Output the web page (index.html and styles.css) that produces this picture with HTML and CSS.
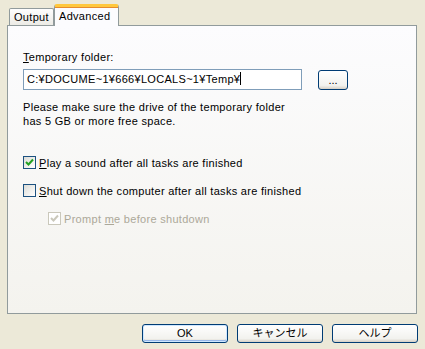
FILE: index.html
```html
<!DOCTYPE html>
<html lang="ja">
<head>
    <meta charset="UTF-8">
    <title>Options</title>
    <link rel="stylesheet" href="styles.css">
</head>
<body>
    <div class="tabs">
        <div class="tab">Output</div>
        <div class="tab active">Advanced</div>
    </div>
    <div class="panel">
        <div class="label"><u>T</u>emporary folder:</div>
        <div class="folder-row">
            <div class="textbox">C:¥DOCUME~1¥666¥LOCALS~1¥Temp¥<span class="caret"></span></div>
            <button class="btn browse">...</button>
        </div>
        <div class="note">Please make sure the drive of the temporary folder<br>has 5 GB or more free space.</div>
        <label class="check">
            <span class="box checked">
                <svg width="9" height="9" viewBox="0 0 9 9"><path d="M1 4 L3.5 6.5 L8 1.5" fill="none" stroke="#21a121" stroke-width="2"/></svg>
            </span>
            <span><u>P</u>lay a sound after all tasks are finished</span>
        </label>
        <label class="check">
            <span class="box"></span>
            <span><u>S</u>hut down the computer after all tasks are finished</span>
        </label>
        <label class="check sub disabled">
            <span class="box checked">
                <svg width="9" height="9" viewBox="0 0 9 9"><path d="M1 4 L3.5 6.5 L8 1.5" fill="none" stroke="#cac8bb" stroke-width="2"/></svg>
            </span>
            <span>Prompt <u>m</u>e before shutdown</span>
        </label>
    </div>
    <div class="buttons">
        <button class="btn default">OK</button>
        <button class="btn">キャンセル</button>
        <button class="btn">ヘルプ</button>
    </div>
</body>
</html>
```

FILE: styles.css
```css
body {
    margin: 0;
    background: #ece9d8;
    font-family: "Liberation Sans", "Noto Sans CJK JP", sans-serif;
    font-size: 11px;
    letter-spacing: 0.3px;
    color: #000;
    width: 425px;
    height: 349px;
    overflow: hidden;
}
.tabs {
    display: flex;
    align-items: flex-end;
    height: 25px;
    padding-left: 9px;
}
.tab {
    height: 16px;
    line-height: 16px;
    padding: 0 4px;
    border: 1px solid #919b9c;
    border-bottom: none;
    border-radius: 2px 2px 0 0;
    background: linear-gradient(#fefefe, #ecebe6);
    width: 35px;
}
.tab.active {
    position: relative;
    height: 19px;
    line-height: 18px;
    width: 55px;
    padding: 0 4px;
    margin-bottom: -1px;
    background: #fcfcfe;
    border-top: 3px solid #ffc83c;
    box-shadow: inset 0 1px 0 #e68b2c;
    border-radius: 3px 3px 0 0;
    z-index: 1;
}
.panel {
    margin: 0 8px 0 7px;
    height: 272px;
    border: 1px solid #919b9c;
    background: linear-gradient(#fcfcfe, #f4f3ee);
    padding: 15px 0 0 15px;
}
.label {
    margin-top: 10px;
}
.folder-row {
    display: flex;
    align-items: center;
    margin-top: 6px;
}
.textbox {
    width: 274px;
    height: 19px;
    line-height: 19px;
    padding-left: 3px;
    border: 1px solid #7f9db9;
    background: #fff;
}
.caret {
    display: inline-block;
    width: 1px;
    height: 13px;
    background: #000;
    vertical-align: -2px;
}
.btn {
    font: inherit;
    color: #000;
    border: 1px solid #003c74;
    border-radius: 3px;
    background: linear-gradient(#ffffff, #f2f2ee 80%, #d6d0c5);
    padding: 0;
}
.browse {
    width: 30px;
    height: 20px;
    margin-left: 16px;
    line-height: 14px;
}
.note {
    margin-top: 10px;
    line-height: 14px;
}
.check {
    display: flex;
    align-items: center;
    gap: 3px;
    height: 13px;
    margin-top: 15px;
}
.check + .check {
    margin-top: 15px;
}
.check:first-of-type {
    margin-top: 28px;
}
.box {
    width: 11px;
    height: 11px;
    border: 1px solid #1c5180;
    background: linear-gradient(135deg, #dcdcd7, #fff);
    display: flex;
    align-items: center;
    justify-content: center;
}
.sub {
    padding-left: 25px;
}
.disabled {
    color: #aca899;
}
.disabled .box {
    border-color: #cac8bb;
    background: #fff;
}
.buttons {
    display: flex;
    justify-content: flex-end;
    gap: 9px;
    padding: 10px 7px 0 0;
}
.buttons .btn {
    width: 86px;
    height: 19px;
    line-height: 15px;
}
.btn.default {
    box-shadow: inset 0 0 0 1px #cee7ff, inset 0 -1px 0 1px #98b8ea;
}
```
